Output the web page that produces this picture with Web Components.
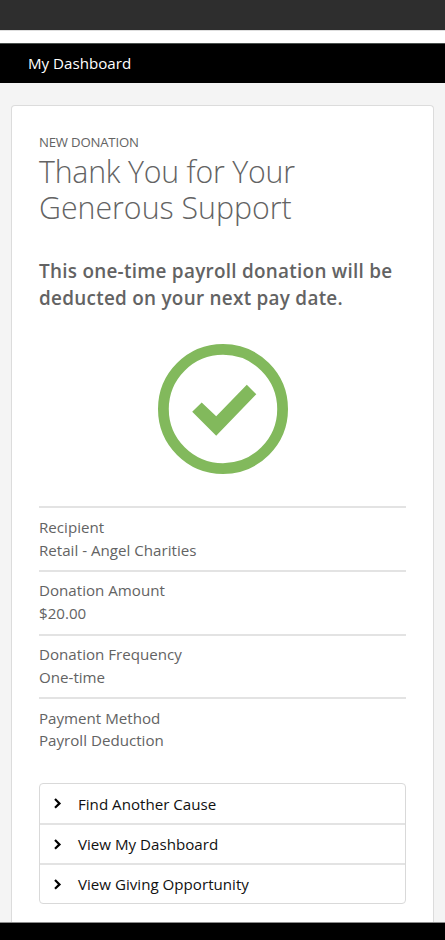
<!DOCTYPE html>
<html lang="en">
<head>
<meta charset="utf-8">
<title>My Dashboard</title>
<style>
html,body{margin:0;height:940px;overflow:hidden}
body{font-family:"Open Sans","Noto Sans",sans-serif;font-size:15.14px;line-height:22.7px;color:#636363;background:#f4f4f4}
</style>
</head>
<body>
<donation-page></donation-page>
<script>
function define(name, html) {
  const t = document.createElement('template');
  t.innerHTML = html;
  customElements.define(name, class extends HTMLElement {
    constructor() {
      super();
      this.attachShadow({mode: 'open'}).append(t.content.cloneNode(true));
    }
  });
}

define('top-bar', `<style>
:host{display:block;flex:none}
.browser{height:30px;background:#2e2e2e}
.gap{height:13px;box-sizing:border-box;background:#fff;border-top:1px solid #dedede}
nav{height:40px;box-sizing:border-box;background:#000;border-top:1px solid #4a504d;color:#fff;padding-left:28px;line-height:38px}
</style><div class="browser"></div><div class="gap"></div><nav><slot></slot></nav>`);

define('page-title', `<style>
:host{display:block}
.eyebrow{font-size:13.2px;line-height:18px;letter-spacing:-.2px}
h1{margin:3px 0 0;font-size:30.3px;line-height:36.4px;font-weight:300}
.tight{letter-spacing:-.22px}
</style><div class="eyebrow"><slot name="eyebrow"></slot></div><h1><div class="tight"><slot name="first"></slot></div><slot></slot></h1>`);

define('lead-text', `<style>
:host{display:block;margin-top:31px;font-size:18.9px;line-height:27.2px;font-weight:600;letter-spacing:.27px}
</style><slot></slot>`);

define('success-icon', `<style>
:host{display:flex;justify-content:center;margin-top:32px}
svg{display:block}
</style><svg width="130" height="130" viewBox="0 0 130 130"><circle cx="65" cy="65" r="59.6" fill="none" stroke="#82b95c" stroke-width="10.8"/><path d="M34.2 67.7L43.7 58.4L58.2 72.2L88.8 40.7L98.3 50.2L58.2 91.8Z" fill="#82b95c"/></svg>`);

define('detail-row', `<style>
:host{display:block;box-sizing:border-box;height:63.65px;border-top:2px solid #e3e3e3;padding-top:7.4px}
</style><div><slot name="label"></slot></div><div><slot></slot></div>`);

define('action-list', `<style>
:host{display:block;box-sizing:border-box;height:121px;border:1px solid #d9d9d9;border-radius:4px;margin-top:22.4px}
</style><slot></slot>`);

define('action-link', `<style>
:host{display:flex;align-items:center;box-sizing:border-box;height:40px;padding-left:14px;gap:16px;color:#111;border-top:2px solid #e3e3e3}
:host(:first-child){border-top:0;height:39px}
svg{display:block;flex:none}
</style><svg width="8" height="11" viewBox="0 0 8 11"><path d="M1 1L5.5 5.4L1 9.8" fill="none" stroke="#000" stroke-width="2.2"/></svg><span><slot></slot></span>`);

define('content-card', `<style>
:host{display:block;flex:1;box-sizing:border-box;margin:22px 11px 0;padding:27px 27px 0;min-height:0;background:#fff;border:1px solid #dcdcdc;border-bottom:0;border-radius:4px 4px 0 0}
</style><slot></slot>`);

define('donation-page', `<style>
:host{display:flex;flex-direction:column;height:940px;overflow:hidden}
footer{flex:none;background:#000;border-top:1px solid #8c8c8c;box-sizing:border-box;height:18px}
.rows{margin-top:32.2px}
</style>
<top-bar>My Dashboard</top-bar>
<content-card>
<page-title><span slot="eyebrow">NEW DONATION</span><span slot="first">Thank You for Your</span>Generous Support</page-title>
<lead-text>This one-time payroll donation will be<br>deducted on your next pay date.</lead-text>
<success-icon></success-icon>
<div class="rows">
<detail-row><span slot="label">Recipient</span>Retail - Angel Charities</detail-row>
<detail-row><span slot="label">Donation Amount</span>$20.00</detail-row>
<detail-row><span slot="label">Donation Frequency</span>One-time</detail-row>
<detail-row><span slot="label">Payment Method</span>Payroll Deduction</detail-row>
</div>
<action-list>
<action-link>Find Another Cause</action-link>
<action-link>View My Dashboard</action-link>
<action-link>View Giving Opportunity</action-link>
</action-list>
</content-card>
<footer></footer>`);
</script>
</body>
</html>
